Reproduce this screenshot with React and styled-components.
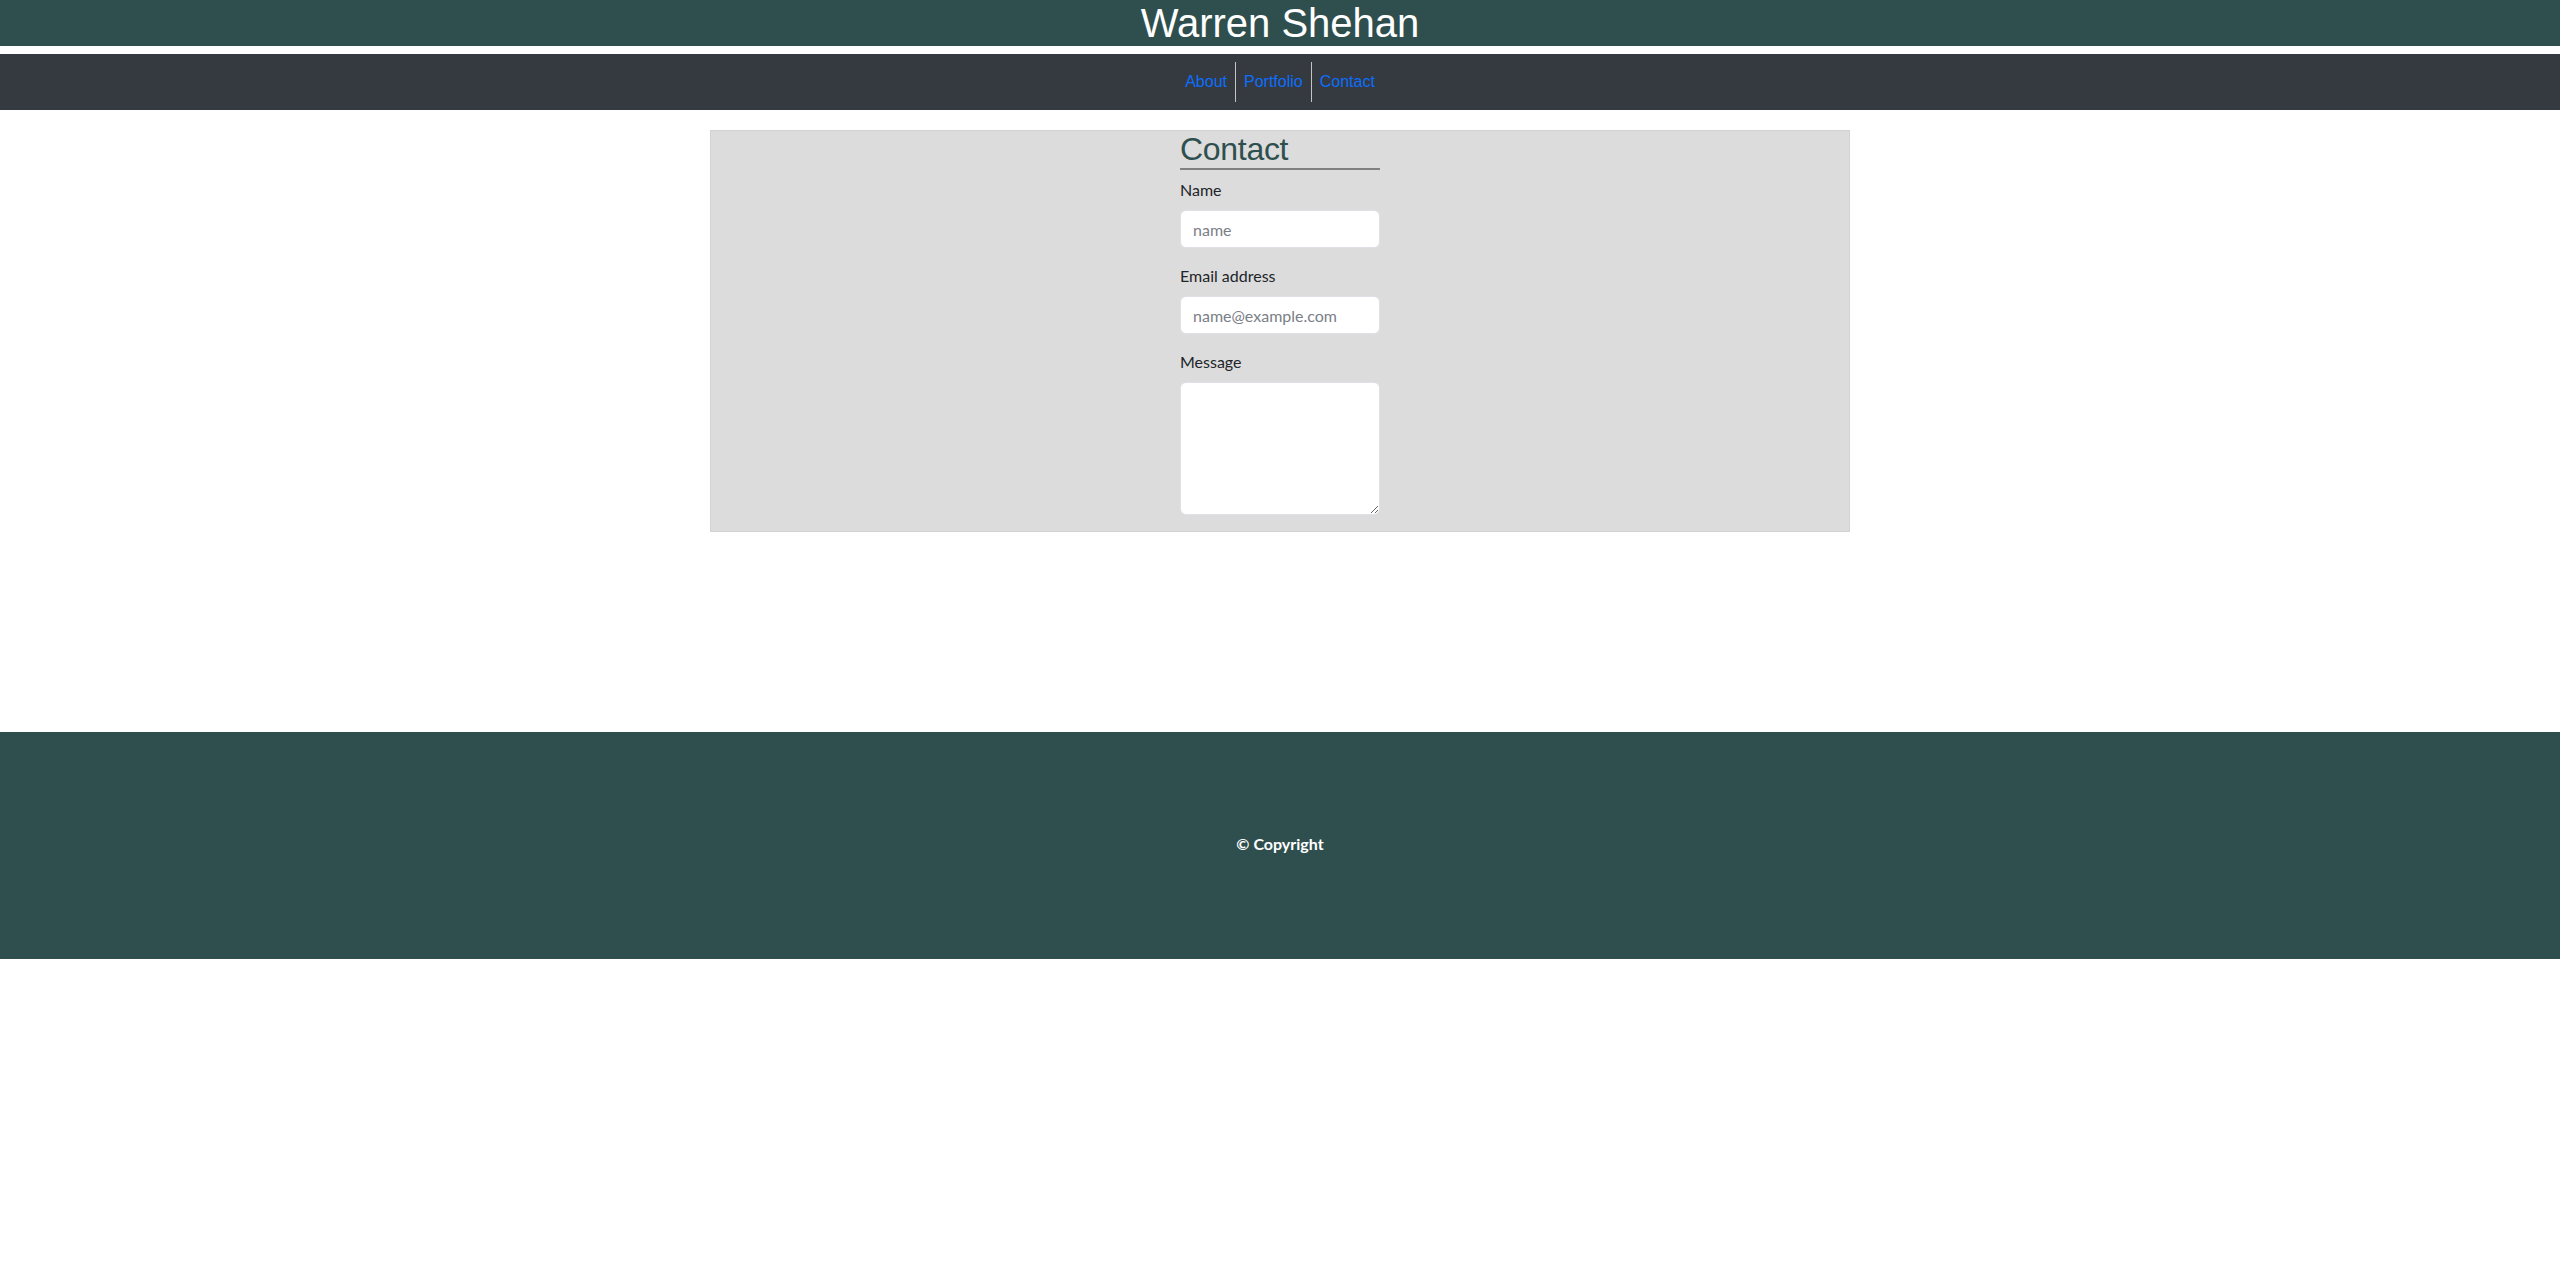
import React from 'react';
import styled, { createGlobalStyle } from 'styled-components';

const GlobalStyle = createGlobalStyle`
  body {
    margin: 0;
    font-family: "Segoe UI", Lato, "Noto Sans", sans-serif;
    font-size: 16px;
    line-height: 1.5;
    color: #212529;
    background: #fff;
  }
  *, *::before, *::after {
    box-sizing: border-box;
  }
`;

const Header = styled.header`
  background: darkslategray;
  margin-bottom: 8px;
`;

const Title = styled.h1`
  margin: 0;
  font-family: "Liberation Sans", Arial, sans-serif;
  font-size: 40px;
  font-weight: 400;
  line-height: 46px;
  color: #fff;
  text-align: center;
`;

const NavBar = styled.nav`
  background: #343a40;
  padding: 8px 0;
`;

const NavList = styled.ul`
  display: flex;
  justify-content: center;
  list-style: none;
  margin: 0;
  padding: 0;
`;

const NavItem = styled.li`
  & + & {
    border-left: 1px solid #c4c4c4;
  }
`;

const NavLink = styled.a`
  display: block;
  padding: 8px;
  font-family: "Liberation Sans", Arial, sans-serif;
  font-size: 16px;
  line-height: 24px;
  color: #0d6efd;
  text-decoration: none;
`;

const Main = styled.main`
  width: 1140px;
  margin: 20px auto 200px;
  background: gainsboro;
  border: 1px solid #d2d2d2;
  display: flex;
  justify-content: center;
`;

const Form = styled.form`
  width: 200px;
  margin-top: -1px;
`;

const Heading = styled.h2`
  margin: 0 0 8px;
  font-family: "Liberation Sans", Arial, sans-serif;
  font-size: 32px;
  font-weight: 400;
  line-height: 1.2;
  letter-spacing: -0.3px;
  color: darkslategray;
  border-bottom: 2px solid grey;
`;

const Field = styled.div`
  margin-bottom: 16px;
`;

const Label = styled.label`
  display: block;
  margin-bottom: 8px;
  font-size: 16px;
  line-height: 24px;
`;

const Input = styled.input`
  display: block;
  width: 100%;
  height: 38px;
  padding: 6px 12px;
  font-family: inherit;
  font-size: 16px;
  line-height: 24px;
  color: #212529;
  background: #fff;
  border: 1px solid #dee2e6;
  border-radius: 6px;
  &::placeholder {
    color: #7a8087;
  }
`;

const TextArea = styled(Input).attrs({ as: 'textarea' })`
  height: 133px;
  resize: vertical;
`;

const Footer = styled.footer`
  height: 227px;
  background: darkslategray;
  display: flex;
  align-items: center;
  justify-content: center;
`;

const Copy = styled.p`
  margin: 0 0 3px;
  color: #fff;
  font-weight: 700;
  font-size: 16px;
`;

const links = ['About', 'Portfolio', 'Contact'];

export default function App() {
  return (
    <>
      <GlobalStyle />
      <Header>
        <Title>Warren Shehan</Title>
      </Header>
      <NavBar>
        <NavList>
          {links.map(l => (
            <NavItem key={l}>
              <NavLink href={`#${l.toLowerCase()}`}>{l}</NavLink>
            </NavItem>
          ))}
        </NavList>
      </NavBar>
      <Main>
        <Form onSubmit={e => e.preventDefault()}>
          <Heading>Contact</Heading>
          <Field>
            <Label htmlFor="name">Name</Label>
            <Input id="name" type="text" placeholder="name" />
          </Field>
          <Field>
            <Label htmlFor="email">Email address</Label>
            <Input id="email" type="email" placeholder="name@example.com" />
          </Field>
          <Field>
            <Label htmlFor="message">Message</Label>
            <TextArea id="message" />
          </Field>
        </Form>
      </Main>
      <Footer>
        <Copy>© Copyright</Copy>
      </Footer>
    </>
  );
}
